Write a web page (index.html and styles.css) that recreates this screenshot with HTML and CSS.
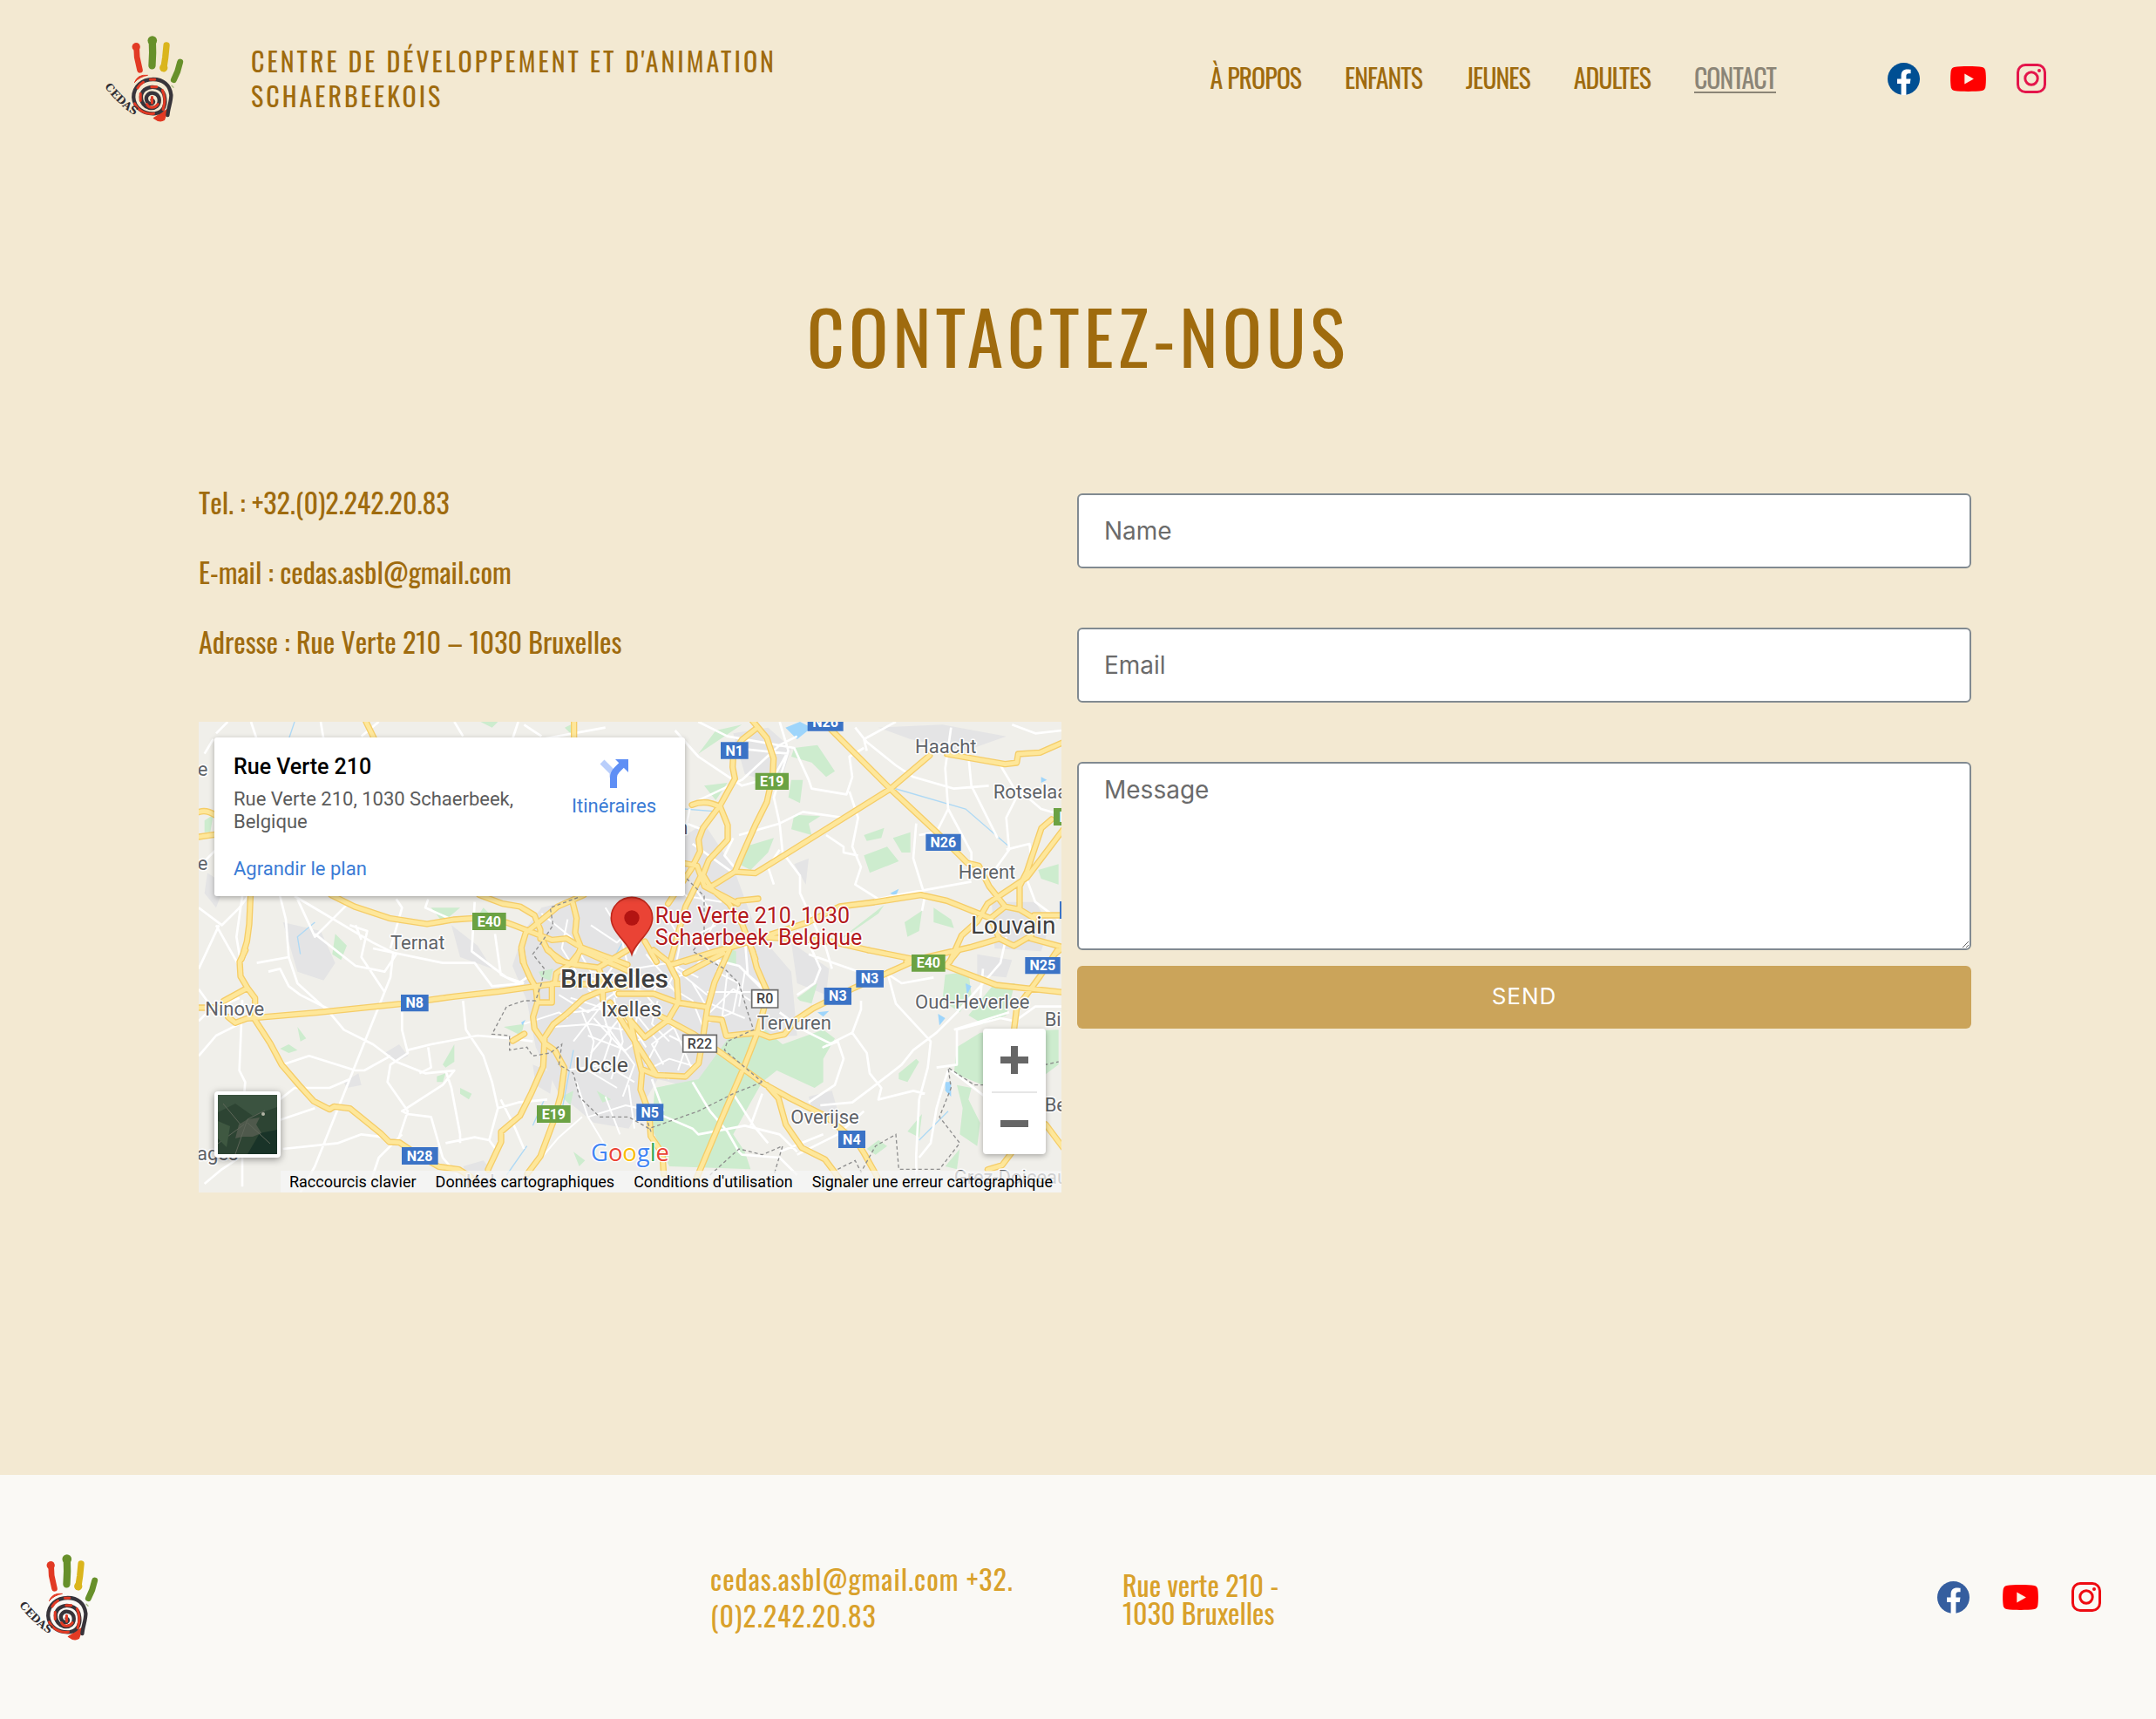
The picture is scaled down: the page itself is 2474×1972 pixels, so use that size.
FILE: index.html
```html
<!DOCTYPE html>
<html lang="fr">
<head>
<meta charset="utf-8">
<meta name="viewport" content="width=device-width, initial-scale=1">
<title>Contact – CEDAS</title>
<link rel="stylesheet" href="styles.css">
</head>
<body>
<svg class="defs" aria-hidden="true">
  <symbol id="logo" viewBox="66 306 280 306">
    <g fill="none" stroke-linecap="round" stroke-linejoin="round">
      <path d="M176 346L178 385L188 430" stroke="#e23a24" stroke-width="20"/>
      <circle cx="175" cy="350" r="14" fill="#e23a24"/>
      <path d="M231 330L232 370L230 415" stroke="#67902a" stroke-width="25"/>
      <circle cx="231" cy="328" r="16" fill="#67902a"/>
      <path d="M280 344L276 385L270 425" stroke="#dab51c" stroke-width="22"/>
      <circle cx="270" cy="422" r="14" fill="#dab51c"/>
      <path d="M327 402L318 435L305 464" stroke="#67902a" stroke-width="21"/>
      <path d="M170 472Q180 444 215 448Q188 452 170 472Z" fill="#e23a24" stroke="#e23a24" stroke-width="3"/>
      <path d="M236 596L286 564L272 602Q256 612 236 596Z" fill="#e23a24" stroke="#e23a24" stroke-width="4"/>
      <path d="M230 533Q240 540 230 546C214 548 206 532 212 520C222 502 248 508 254 526C260 552 240 566 218 560C190 550 184 516 204 498C228 480 264 490 272 516C280 548 272 574 242 580C200 584 168 560 166 524C166 486 196 462 234 462C268 462 292 482 296 516C296 540 286 560 284 586" stroke="#37343a" stroke-width="13"/>
      <path d="M230 524V544M212 548C220 564 240 562 250 548M266 500Q280 530 268 566M170 546C184 572 210 584 236 580M180 492Q186 480 200 472M224 463H240M228 488H246M190 512V536" stroke="#e23a24" stroke-width="9"/>
      <path d="M298 484L304 490" stroke="#a9ba86" stroke-width="4"/>
    </g>
    <path id="thumb" d="M64 486Q112 548 160 580L230 606" fill="none"/>
    <text class="logo-text"><textPath href="#thumb" startOffset="2">CEDAS</textPath></text>
  </symbol>
  <symbol id="facebook" viewBox="0 0 37 37">
    <circle cx="18.500" cy="18.500" r="18.500"/>
    <path d="M15.600 37V24H11v-5.400h4.600v-4c0-4.700 2.800-7.200 7-7.200 2 0 4 .3 4 .3v4.600h-2.200c-2.300 0-3 1.400-3 2.900v3.400h5.100L25.700 24h-4.300v13z" fill="#fff"/>
  </symbol>
  <symbol id="youtube" viewBox="0 0 41 29">
    <path d="M20.500 0c6 0 12 .2 16 .9 2 .5 3.200 1.800 3.700 3.800.9 5 .9 14.600 0 19.600-.5 2-1.700 3.300-3.700 3.800-4 .7-10 .9-16 .9s-12-.2-16-.9c-2-.5-3.200-1.800-3.700-3.800-.9-5-.9-14.600 0-19.600C1.300 2.700 2.500 1.400 4.500.9c4-.7 10-.9 16-.9z"/>
    <path d="M16.300 8.400v12.200l10.600-6.100z" fill="#faf3e4"/>
  </symbol>
  <symbol id="instagram" viewBox="0 0 34 34">
    <rect x="1.500" y="1.500" width="31" height="31" rx="8.500" fill="none" stroke="currentColor" stroke-width="3"/>
    <circle cx="17" cy="17" r="7.200" fill="none" stroke="currentColor" stroke-width="3"/>
    <circle cx="26" cy="8" r="2"/>
  </symbol>
</svg>

<header class="site-header">
  <a class="brand" href="#"><svg class="logo" role="img" aria-label="CEDAS"><use href="#logo"/></svg></a>
  <p class="site-name">Centre de développement et d'animation<br>Schaerbeekois</p>
  <nav class="nav">
    <a href="#">À propos</a>
    <a href="#">Enfants</a>
    <a href="#">Jeunes</a>
    <a href="#">Adultes</a>
    <a class="current" href="#">Contact</a>
  </nav>
  <div class="social">
    <a class="fb" href="#" aria-label="Facebook"><svg><use href="#facebook"/></svg></a>
    <a class="yt" href="#" aria-label="YouTube"><svg><use href="#youtube"/></svg></a>
    <a class="ig" href="#" aria-label="Instagram"><svg><use href="#instagram"/></svg></a>
  </div>
</header>

<main>
  <h1>Contactez-nous</h1>
  <div class="contact">
    <section class="details">
      <p>Tel. : +32.(0)2.242.20.83</p>
      <p>E-mail : cedas.asbl@gmail.com</p>
      <p>Adresse : Rue Verte 210 – 1030 Bruxelles</p>
      <div class="map">
        <svg class="map-canvas" viewBox="0 0 2970 1620" preserveAspectRatio="xMidYMid slice">
          <defs>
            <g id="roads">
              <g transform="translate(-24 -24)">
                <path d="M600 24L632 90M1316 24V90M24 335Q50 325 80 345M24 420L80 412M203 610L198 720L190 780L172 840M480 620L560 660L680 700L810 720L900 705L970 700L1085 715L1150 740L1240 775L1290 770L1340 800L1500 860M990 620L1070 650L1130 660L1180 690L1200 740L1200 770M1350 620L1260 660L1200 710L1150 750L1135 800L1140 850M1310 640L1325 700L1320 750L1340 800L1320 850M1205 770L1225 810L1280 850"/>
              </g>
              <g transform="translate(1476 -24)">
                <path d="M430 20L480 80L503 150L500 210L480 300L440 380L400 470L370 540L290 590M440 50L395 85L365 130L362 180L370 220L320 310L260 390L245 430L250 470L220 530L140 650M222 310Q270 290 320 318L345 380L345 430L280 500L260 550L290 600L350 650L395 720L440 840M190 510L240 520L265 590L380 650M370 540L440 545L545 480L905 255L1040 140M700 50L905 255L1060 400L1170 510L1210 520L1245 590L1300 660M1100 135L1300 170L1340 165L1345 135L1420 130L1500 95M1500 395L1375 560L1240 650L1205 710L1150 760L1110 850M1460 360L1425 390L1375 540L1350 590V670M380 640L450 633M200 850L420 780L620 715L730 660L850 645L1010 620L1100 640L1250 700L1300 660L1350 670L1400 700L1390 760L1330 795L1280 770L1250 700M1400 690H1500M1390 770L1500 800L1475 820M1280 770L1180 800L960 850M250 560L200 660L150 840M60 780L100 850M400 760L700 780L830 810"/>
              </g>
              <g transform="translate(-24 786)">
                <path d="M185 0L165 40L168 90L192 130L218 165L218 240L270 320L310 395L370 465L420 520L475 548L490 538L545 545L650 630L680 660L715 662L780 705L850 745L920 755L960 780M24 198H90M110 175L192 130M125 230L150 250L190 235L430 215L720 185L900 160L1060 142L1250 115L1500 120L1410 140L1350 165L1290 220L1245 255L1215 300L1210 400L1170 490L1130 570L1065 625L1065 660L1020 755M1135 0L1145 50L1165 95L1185 130L1190 180L1175 230L1180 270L1215 320L1250 345L1283 405L1270 500L1245 590L1200 710L1155 770M1240 115V180H1190M1105 312L1145 288M1230 0L1260 35L1320 50L1400 60L1415 100V170M1300 50L1340 0L1500 70M1250 115L1255 80L1300 50M1400 60L1500 0"/>
              </g>
              <g transform="translate(1476 786)">
                <path d="M830 0L980 30L1100 55L1270 120L1500 145M980 40L780 130L640 200L580 240L540 290L490 300L450 285M1100 50L1140 0M1480 0L1420 90L1340 200L1330 280M430 0L445 60L480 140L470 200L445 290L400 405L320 590L240 780M440 285L340 295L325 240L280 235M350 0L300 110L275 200L260 300L245 390L200 435L100 430L50 410M-30 150H90L170 180L270 195M90 0L140 40L150 60L170 100L175 180L140 240L60 300M0 200L40 380L50 420L45 480L75 560L80 640L120 700L125 770M100 220L230 290L310 345L470 460L560 510L680 570L740 620L790 660L815 700L860 780M480 465L520 510L545 600L600 680L680 720L740 800M200 80L330 10M150 50L350 -10M-60 180L100 430M0 230L60 300M1440 600L1500 680M1320 700L1290 740L1240 755"/>
              </g>
            </g>
          </defs>
          <rect width="2970" height="1620" fill="#f0efea"/>
          <g fill="#e4e4e5">
            <path d="M1180 640L1500 560L1660 400L1740 350L1840 500L1920 720L2040 860L2060 1080L1900 1090L1780 1170L1700 1260L1580 1230L1480 1400L1360 1380L1240 1280L1160 1120L1130 960L1080 840L1120 720Z"/>
            <path d="M290 690L420 720L470 830L430 890L340 860ZM30 520L90 560L60 640L20 590ZM870 700L960 770L1010 850L900 810ZM1840 40L1960 20L2040 90L2000 220L1880 180ZM2340 20L2560 10L2780 50L2640 100L2450 60ZM2730 620L2880 620L2930 700L2900 790L2740 780ZM2040 760L2170 850L2160 940L2060 900ZM2100 1290L2180 1270L2200 1340L2120 1360ZM2680 800L2800 820L2780 880L2680 870ZM640 1140L690 1110L720 1150L680 1170ZM910 1530L980 1510L1020 1560L940 1600ZM500 1240L550 1210L560 1250L510 1260ZM2050 490L2100 470L2090 560ZM1150 1180L1220 1210L1210 1280L1160 1250Z"/>
          </g>
          <g fill="#cdecce">
            <path d="M1720 1230L1830 1080L1950 1060L2010 1110L2150 1060L2190 1090L2150 1160L2150 1240L2120 1260L1990 1200L1940 1240L1900 1310L1840 1420L1880 1480L1900 1540L1620 1530L1560 1400L1570 1260Z"/>
            <path d="M2050 90L2130 80L2190 170L2160 190L2110 140L2040 120ZM2040 200H2080L2070 280L2030 260ZM2050 320L2140 325L2100 350L2110 390L2040 370ZM1880 430L1980 400L1960 450L1900 510L1860 490ZM2290 390L2360 365L2350 400L2300 410ZM2390 400L2450 380V450L2420 450ZM2290 460L2370 430L2410 480L2310 520ZM2430 690L2490 650L2480 720L2440 740ZM2530 640L2590 680L2600 710L2530 690ZM2890 510L2960 490V560L2900 540ZM2570 870L2650 860L2660 940L2620 1000L2560 960ZM2650 1010L2740 900L2810 900L2780 1010L2700 1040ZM2610 1120L2690 1070L2960 1060L2960 1180L2880 1240L2820 1180L2700 1250L2600 1210ZM2410 1210L2470 1160L2480 1170L2440 1240L2410 1230ZM2060 950L2130 900L2110 970L2070 960ZM2610 1250L2660 1260L2650 1300L2690 1380L2680 1460L2620 1420L2630 1330ZM2440 1410L2490 1350L2480 1430ZM2300 1470L2340 1440L2370 1460L2330 1490ZM800 640H900L840 690ZM980 640L1030 690L960 670ZM470 730L510 770L490 820L460 800ZM970 0L1030 0L1010 20ZM2610 1540L2620 1470L2570 1530ZM1720 110L1870 10L1780 30ZM1740 220L1820 210L1780 270ZM340 1050L370 1090L350 1100ZM280 1125L310 1110L340 1130L310 1140ZM820 1220L850 1210L840 1240L820 1240ZM840 1180L880 1110L880 1170L850 1190ZM900 1260L940 1280L930 1300L900 1280ZM1050 1050L1120 1040L1110 1080ZM1250 1290L1290 1270L1280 1320ZM1370 1270L1420 1300L1390 1310ZM1290 1480L1330 1510L1310 1530ZM20 340L50 320L40 380H20ZM1260 20L1290 5V50ZM1790 770L1850 790L1850 840L1800 820ZM2180 770L2360 630L2340 660ZM1170 860L1220 850L1210 890L1180 880Z"/>
          </g>
          <g fill="#9ed5fb">
            <path d="M2020 20L2070 0L2110 20L2060 60ZM2380 590L2410 575L2400 600ZM2545 1005L2570 1020L2550 1045ZM2570 1240H2590V1290L2570 1270ZM2130 1000L2170 995L2150 1015ZM2900 190L2920 200L2900 210ZM2640 900L2660 910L2645 940ZM1110 1035L1125 1025L1115 1045ZM1540 1160L1560 1170L1545 1180Z"/>
          </g>
          <path d="M2380 225L2640 300L2790 430M330 0L310 60M1250 1340L1290 1130M1130 1460L1060 1560M1190 1300L1150 1390M400 690L340 740L350 800M1470 740L1420 830M1670 300L1800 310M2580 1340L2480 1440" fill="none" stroke="#aed9f5" stroke-width="4"/>
          <g class="minor">
            <path d="M180 0L200 60M100 0L60 40M420 0L430 60M560 50L620 0M880 0L910 50M1100 0L1080 60M1120 10L1180 50M1180 60L1400 20M20 110L50 60M0 500L60 440M0 640L80 700L140 640L170 600M150 600L130 740L150 860L60 700M280 600L300 680L310 810L200 830M0 850L70 700M340 610L400 740L440 700L520 620M330 600L600 760L680 800L640 860L540 840L400 730M520 700L580 720L560 810L620 900L640 930M680 610L700 640L660 780M950 620L940 790L1060 880L1120 900M790 610L780 640L870 680M560 750L540 700M1020 730L1040 870L1100 900L1130 880M600 780L840 830L950 830L1010 910L1120 900"/>
            <path d="M670 790L660 880L400 1530L350 1620M150 1010V960L140 1200L160 1240L150 1370V1600M310 810L340 900L450 1000L500 1060L600 1110L680 1170L780 1210L880 1200L840 1250L700 1340L720 1350L800 1360L840 1500L900 1570M700 1000V1060L720 1140L660 1180L650 1240L720 1340L690 1430M520 1230L450 1260H330L280 1300M290 1180L380 1150L540 1200H570L660 1150M290 1470L480 1450L560 1420L640 1430M590 1590L620 1500L700 1420M910 960L920 1060L980 1150L1010 1240L1030 1330L1000 1440L1030 1480M720 1130L800 1110L960 1080L1080 1090L1150 1100M1030 1330L1100 1310L1200 1300M1040 1300L1090 1400L1120 1470M850 1450L950 1430L1000 1440M850 1200L870 1260L900 1420V1450M280 1370L400 1330M0 1030L30 1000L140 950M0 1150L60 1080L140 1040M240 860L280 850L310 910L350 940L450 990M20 1590L80 1540L140 1500M0 920L50 990M790 1120L800 1190L760 1210"/>
            <path d="M1640 30L1720 120L1870 220L1980 190L2030 100L2000 0M1720 0L1820 50L2050 90L2100 200L2110 230L2230 250L2250 190L2240 120L2290 90M2030 100L1980 260L2000 350L2010 450L2070 530V590L2130 720L2160 780L2180 850M1700 280L1870 200L2000 80L2060 50M1860 390L2000 350L2080 310L2220 330M2240 240L2270 330L2250 430L2280 500L2260 560L2340 610L2440 590L2660 550M2260 20L2300 70L2400 150L2460 190L2600 230L2720 220M2470 350L2460 470L2500 600L2490 650M2590 20L2570 160L2580 300L2540 380L2480 390M2580 300L2660 450V490M2760 150L2820 250L2780 330L2790 440L2740 510M2650 120L2660 220L2750 400M2800 10L2880 40L2970 30M2970 320L2900 300L2830 240M2850 540L2880 620L2960 680M2780 440L2860 420L2870 500L2820 560M1840 400L1810 460L1860 520M1700 420L1840 520M1690 300L1680 350L1730 370M2160 390L2220 430L2220 450L2270 460M1840 90L2030 110M2400 0L2290 60L2300 100M2000 440L1960 500L1980 560"/>
            <path d="M2060 720L2100 760L2140 850L2120 900L2060 940M1880 740L1890 870L1950 920M2280 960V990L2250 1070L2300 1140L2310 1210L2350 1260L2340 1300L2460 1270L2500 1280M2370 860L2400 970L2520 1100L2510 1190L2480 1300L2470 1490L2470 1560M2250 1070L2150 1120L2200 1100L2220 1160L2190 1250L2100 1310M2140 1320L2250 1310L2330 1250L2420 1180L2460 1130L2540 1070L2610 1000L2700 900L2760 830L2780 740M2540 1190L2610 1180V1060L2760 1020L2810 1030L2880 980H2970M2580 1200L2560 1260L2540 1330L2520 1450L2480 1500M2590 1200L2720 1300M1700 1240L1760 1340L1820 1410L1860 1480L1870 1490L2000 1500L2060 1560M1560 1340L1700 1400L1720 1420L1880 1390L1920 1400L2000 1420L2060 1480M1940 1280L1900 1390M1560 1230L1600 1340M1840 1280L1910 1390L1960 1450M2060 1490L2200 1420L2290 1340M2000 1480L2150 1420M2300 870L2100 800M2000 1000L2080 1060L2180 1110M1980 960L1860 840L1780 820M2360 860L2420 900L2530 880M2700 850L2690 960M2790 1000L2600 1060"/>
          </g>
          <g class="streets">
            <path d="M1180 660L1280 740L1350 860L1500 880M1270 680L1250 780L1300 860M1350 700L1440 760L1500 700M1400 640L1450 720L1480 850L1540 900M1560 660L1500 800M1600 650L1660 750L1640 850L1750 940M1700 560L1780 680L1740 760L1800 850M1560 500L1680 600L1800 620M1240 940L1340 1000L1450 920M1220 1050L1350 1040L1460 1060M1290 1100L1400 960L1500 1100M1320 1000L1360 1100L1340 1200L1440 1260M1380 970L1420 1090L1380 1210M1430 950L1460 1100L1420 1230M1260 1200L1400 1180L1500 1240M1300 1240L1340 1360L1400 1460M1320 1360L1240 1430L1180 1500M1340 1360L1470 1320L1560 1340M1500 1000L1580 1100L1540 1180L1620 1230M1540 940L1640 1060L1700 1200M1600 900L1700 960L1740 1060L1680 1140M1650 1040L1560 1110L1600 1180M1700 900L1760 1000L1840 920L1900 960M1780 860L1860 900L1840 1000L1740 1040M1820 860L1800 1040M1750 930H1900M1760 970L1880 1020M1880 860L1860 980M1620 1080L1680 1110L1650 1200M1540 1200L1620 1160L1720 1190M1500 850L1620 830L1720 880M1480 1250L1500 1400M1400 1290L1450 1420"/>
            <path d="M1120 1040L1240 1000L1270 1020M1290 1000L1460 980M1280 950L1440 1000L1560 970M1340 920L1480 1040M1240 860L1440 900L1560 870M1580 720L1700 740L1780 700"/>
            <path d="M1360 1020L1480 1150M1340 1080L1470 1130L1560 1060M1350 1140L1450 1020M1400 1040L1500 1180L1460 1290M1520 960L1500 1060L1540 1120M1580 960L1560 1040L1620 1100M1440 820L1400 880L1440 950M1540 800L1600 870L1560 940M1660 820L1620 900L1660 960M1500 920L1620 950M1640 880L1700 860L1740 800"/>
          </g>
          <use href="#roads" class="casing"/>
          <use href="#roads" class="surface"/>
          <g class="border">
            <path d="M1305 605L1210 640L1220 700L1180 760L1150 800L1190 850L1180 900L1160 960L1120 960L1060 980L1010 1075L1070 1080L1070 1130L1130 1120L1150 1150L1210 1140L1250 1110L1240 1180L1290 1210L1310 1290L1380 1360L1480 1360L1550 1400L1720 1340L1840 1280L1940 1240M1680 540L1740 600L1740 740L1700 790L1810 850L1860 900L1890 1000L1910 1060L1820 1100L1810 1130L1940 1240M1540 1360L1560 1420M1760 1560L1860 1470L1940 1490L2010 1460L1980 1560M2200 1540L2260 1510L2280 1550L2330 1460L2400 1420L2410 1540L2550 1540L2620 1450L2550 1360L2590 1260L2580 1190L2670 1250H2720M2870 1190L2960 1170"/>
          </g>
          <g class="shields">
            <path fill="#6ba243" d="M942 657h116v60H942zM1916 176h115v58h-115zM2943 297h60v60h-60zM1164 1320h116v60h-116zM2454 801h116v59h-116z"/>
            <path fill="#3b73c6" d="M1797 70h95v58h-95zM2096 -25h123v57h-123zM2503 386h121v58h-121zM696 939h95v58h-95zM699 1464h125v60H699zM2153 915h94v59h-94zM2263 855h95v59h-95zM2845 810h121v58h-121zM1507 1315h93v59h-93zM2202 1407h93v60h-93zM2964 618h20v60h-20z"/>
            <path fill="#fff" stroke="#6b6b6b" stroke-width="5" d="M1904 923h90v61h-90zM1667 1078h116v59h-116z"/>
            <g class="shield-text">
              <text x="1000" y="704">E40</text><text x="1973" y="221">E19</text><text x="2976" y="344">E</text><text x="1222" y="1367">E19</text><text x="2512" y="847">E40</text>
              <text x="1844" y="116">N1</text><text x="2157" y="18">N26</text><text x="2563" y="432">N26</text><text x="743" y="985">N8</text><text x="761" y="1511">N28</text><text x="2200" y="961">N3</text><text x="2310" y="901">N3</text><text x="2905" y="856">N25</text><text x="1553" y="1362">N5</text><text x="2248" y="1454">N4</text>
            </g>
            <g class="shield-text ring"><text x="1949" y="970">R0</text><text x="1725" y="1124">R22</text></g>
          </g>
          <g class="places">
            <text x="2466" y="107">Haacht</text><text x="2735" y="264">Rotselaar</text><text x="2615" y="540">Herent</text><text x="660" y="783">Ternat</text><text x="22" y="1010">Ninove</text><text x="1922" y="1058">Tervuren</text><text x="2466" y="988">Oud-Heverlee</text><text x="2038" y="1382">Overijse</text><text x="2912" y="1047">Bierbeek</text><text x="2912" y="1340">Beauvechain</text><text x="-4" y="186">e</text><text x="-4" y="509">e</text><text x="-6" y="1510">ages</text><text x="1648" y="387">n</text><text x="920" y="1604">Hal</text><text x="2600" y="1590">Grez-Doiceau</text>
          </g>
          <g class="places town"><text x="1385" y="1014">Ixelles</text><text x="1296" y="1206">Uccle</text></g>
          <g class="places city"><text x="2658" y="728">Louvain</text><text x="1245" y="915" class="capital">Bruxelles</text></g>
          <path d="M1491 800C1480 760 1420 725 1420 675a71 71 0 0 1 142 0C1562 725 1502 760 1491 800Z" fill="#ea4335" stroke="#c0281c" stroke-width="5"/>
          <circle cx="1491" cy="675" r="26" fill="#b31412"/>
          <g class="places pin-label"><text x="1571" y="692">Rue Verte 210, 1030</text><text x="1571" y="768">Schaerbeek, Belgique</text></g>
          <text class="google" x="1350" y="1511"><tspan fill="#4285f4">G</tspan><tspan fill="#ea4335">o</tspan><tspan fill="#fbbc04">o</tspan><tspan fill="#4285f4">g</tspan><tspan fill="#34a853">l</tspan><tspan fill="#ea4335">e</tspan></text>
        </svg>
        <div class="place-card">
          <div class="place-info">
            <strong>Rue Verte 210</strong>
            <span>Rue Verte 210, 1030 Schaerbeek, Belgique</span>
            <a href="#">Agrandir le plan</a>
          </div>
          <a class="directions" href="#">
            <svg viewBox="0 0 34 34"><path d="M3 4L15 16V22" fill="none" stroke="#b9cefb" stroke-width="7"/><path d="M16 34V22Q16 17 20 13L26 7" fill="none" stroke="#5f8ff5" stroke-width="8"/><path d="M18 1H33V16Z" fill="#5f8ff5"/></svg>
            Itinéraires
          </a>
        </div>
        <button class="satellite" type="button" aria-label="Vue satellite"><svg viewBox="0 0 68 68" preserveAspectRatio="none"><rect width="68" height="68" fill="#2d4433"/><path d="M0 0H68V14L40 24L20 10L0 20Z" fill="#3b5340"/><path d="M34 68L48 44L68 40V68Z" fill="#193328"/><path d="M20 50L24 34L34 28L48 26L44 34L50 44L40 48L28 48Z" fill="#4f594c"/><path d="M20 68L34 28L54 18M0 56L30 34M6 10L26 34M34 32L60 56" fill="none" stroke="#5e6659" stroke-width="1"/><path d="M0 30L14 36L10 60L0 50Z" fill="#3f5841"/><circle cx="52" cy="22" r="2" fill="#b3b5a6"/></svg></button>
        <div class="zoom-controls">
          <button type="button" aria-label="Zoom avant"><svg viewBox="0 0 32 32"><path d="M16 0V32M0 16H32"/></svg></button>
          <button type="button" aria-label="Zoom arrière"><svg viewBox="0 0 32 32"><path d="M0 16H32"/></svg></button>
        </div>
        <div class="attribution"><a href="#">Raccourcis clavier</a><span>Données cartographiques</span><a href="#">Conditions d'utilisation</a><a href="#">Signaler une erreur cartographique</a></div>
      </div>
    </section>
    <form class="form">
      <input type="text" name="name" placeholder="Name" aria-label="Name">
      <input type="email" name="email" placeholder="Email" aria-label="Email">
      <textarea name="message" placeholder="Message" aria-label="Message"></textarea>
      <button type="submit">SEND</button>
    </form>
  </div>
</main>

<footer class="site-footer">
  <a class="brand" href="#"><svg class="logo" role="img" aria-label="CEDAS"><use href="#logo"/></svg></a>
  <p class="footer-contact">cedas.asbl@gmail.com +32.<br>(0)2.242.20.83</p>
  <p class="footer-address">Rue verte 210 -<br>1030 Bruxelles</p>
  <div class="social">
    <a class="fb" href="#" aria-label="Facebook"><svg><use href="#facebook"/></svg></a>
    <a class="yt" href="#" aria-label="YouTube"><svg><use href="#youtube"/></svg></a>
    <a class="ig" href="#" aria-label="Instagram"><svg><use href="#instagram"/></svg></a>
  </div>
</footer>
</body>
</html>
```

FILE: styles.css
```css
* { box-sizing: border-box; }

body {
  margin: 0;
  min-height: 100vh;
  display: flex;
  flex-direction: column;
  background: #f3e9d2;
  color: #9f6b0e;
  font-family: Oswald, "Liberation Sans Narrow", "Liberation Sans", sans-serif;
}

p, h1 { margin: 0; font-weight: 400; }
a { color: inherit; text-decoration: none; }
button, input, textarea { font: inherit; }
svg { display: block; }
.defs { position: absolute; width: 0; height: 0; }

.logo { width: 93px; height: 102px; }
.logo-text { font: 700 37px "DejaVu Serif", serif; fill: #2f2d33; }

.site-header {
  display: flex;
  align-items: center;
  height: 180px;
  padding: 0 126px 0 120px;
}
.site-name {
  margin-left: 75px;
  font-size: 30px;
  line-height: 40px;
  letter-spacing: 3px;
  text-transform: uppercase;
}
.nav {
  display: flex;
  gap: 50px;
  margin-left: auto;
  font-size: 30px;
  line-height: 32px;
  letter-spacing: -1px;
  text-transform: uppercase;
}
.nav a { border-bottom: 2px solid transparent; }
.nav .current { color: #8b8577; border-color: #8b8577; }

.social { display: flex; align-items: center; gap: 35px; }
.site-header .social { margin-left: 128px; }
.fb svg { width: 37px; height: 37px; fill: #004f93; }
.yt svg { width: 41px; height: 29px; fill: #f00; }
.ig svg { width: 34px; height: 34px; fill: #e4154b; color: #e4154b; }

main { flex: 1; }
h1 {
  padding-top: 144px;
  font-size: 84px;
  line-height: 120px;
  letter-spacing: 5px;
  text-align: center;
  text-transform: uppercase;
}
.contact {
  display: grid;
  grid-template-columns: 990fr 1026fr;
  gap: 18px;
  padding: 92px 212px 100px 228px;
}
.details p { font-size: 32px; line-height: 40px; margin: 20px 0 40px; font-kerning: none; }
.details p + p { margin-top: 40px; }

.map {
  position: relative;
  height: 540px;
  margin-top: 72px;
  overflow: hidden;
  font-family: Roboto, sans-serif;
}
.map-canvas { width: 100%; height: 100%; }
.minor, .streets { fill: none; stroke: #fff; stroke-width: 8; stroke-linejoin: round; }
.streets { stroke-width: 6; }
.casing, .surface { fill: none; stroke-linejoin: round; stroke-linecap: round; }
.casing { stroke: #f5cd68; stroke-width: 22; }
.surface { stroke: #fee79a; stroke-width: 14; }
.border { fill: none; stroke: #8e8e8e; stroke-width: 4; stroke-dasharray: 12 9; }
.shield-text { font-size: 48px; font-weight: 700; fill: #fff; text-anchor: middle; }
.ring { font-weight: 500; fill: #444; }
.places {
  font-size: 66px;
  fill: #5f6368;
  stroke: #fff;
  stroke-width: 9;
  stroke-linejoin: round;
  paint-order: stroke;
}
.town { font-size: 74px; fill: #4d4d4d; }
.city { font-size: 84px; fill: #3d3d3d; }
.capital { font-size: 90px; font-weight: 500; }
.pin-label { font-size: 75px; fill: #b3191c; }
.google { font: 500 82px "Open Sans", sans-serif; stroke: #fff; stroke-width: 8; paint-order: stroke; }

.place-card {
  position: absolute;
  left: 18px;
  top: 18px;
  display: flex;
  justify-content: space-between;
  width: 540px;
  height: 182px;
  padding: 18px 33px 18px 22px;
  background: #fff;
  border-radius: 3px;
  box-shadow: 0 2px 6px rgba(0, 0, 0, .3);
  font-size: 22px;
  line-height: 26px;
  color: #5b5b5b;
}
.place-info { display: flex; flex-direction: column; width: 330px; }
.place-info strong { font-size: 25px; font-weight: 500; line-height: 32px; color: #000; margin-bottom: 8px; }
.place-info a { margin-top: auto; }
.place-card a { color: #3a7bd5; }
.directions { padding-top: 6px; }
.directions svg { width: 34px; height: 34px; margin: 0 auto 8px; }

.satellite {
  position: absolute;
  left: 18px;
  bottom: 40px;
  width: 76px;
  height: 76px;
  padding: 4px;
  background: #fff;
  border: 0;
  border-radius: 4px;
  box-shadow: 0 2px 8px rgba(0, 0, 0, .4);
}
.satellite svg { width: 100%; height: 100%; }
.zoom-controls {
  position: absolute;
  right: 18px;
  bottom: 44px;
  width: 72px;
  background: #fff;
  border-radius: 4px;
  box-shadow: 0 2px 6px rgba(0, 0, 0, .3);
}
.zoom-controls button { display: grid; place-items: center; width: 52px; height: 72px; margin: 0 auto; padding: 0; border: 0; background: none; }
.zoom-controls button + button { border-top: 2px solid #e6e6e6; }
.zoom-controls svg { width: 32px; height: 32px; stroke: #666; stroke-width: 8; }
.attribution {
  position: absolute;
  right: 0;
  bottom: 0;
  display: flex;
  gap: 22px;
  padding: 0 10px;
  background: rgba(245, 245, 245, .75);
  color: #000;
  font-size: 18px;
  line-height: 25px;
  white-space: nowrap;
}

.form { display: flex; flex-direction: column; padding-top: 30px; font-family: Inter, sans-serif; }
.form input, .form textarea {
  width: 100%;
  border: 2px solid #818a91;
  border-radius: 6px;
  background: #fff;
  padding: 0 29px;
  font-size: 28px;
  color: #555;
}
.form input { height: 86px; margin-bottom: 68px; }
.form textarea { display: block; height: 216px; padding-top: 12px; line-height: 36px; resize: vertical; }
::placeholder { color: #6b6b6b; opacity: 1; }
.form button {
  height: 72px;
  margin-top: 18px;
  padding-bottom: 4px;
  border: 0;
  border-radius: 6px;
  background: #cba45a;
  color: #fff;
  font-size: 26px;
  letter-spacing: 1px;
}

.site-footer {
  display: grid;
  grid-template-columns: 815px 473px 1fr auto;
  align-items: center;
  height: 280px;
  padding-right: 63px;
  background: #faf9f5;
  color: #d9a12b;
}
.site-footer .brand { padding-left: 22px; }
.footer-contact { font-size: 32px; line-height: 42px; letter-spacing: 1px; font-kerning: none; }
.footer-address { padding-top: 4px; font-size: 32px; line-height: 32px; }
.site-footer .fb svg { fill: #355e9f; }
.site-footer .ig svg { fill: #ee0b12; color: #ee0b12; }
.site-footer .social { gap: 38px; }
```
